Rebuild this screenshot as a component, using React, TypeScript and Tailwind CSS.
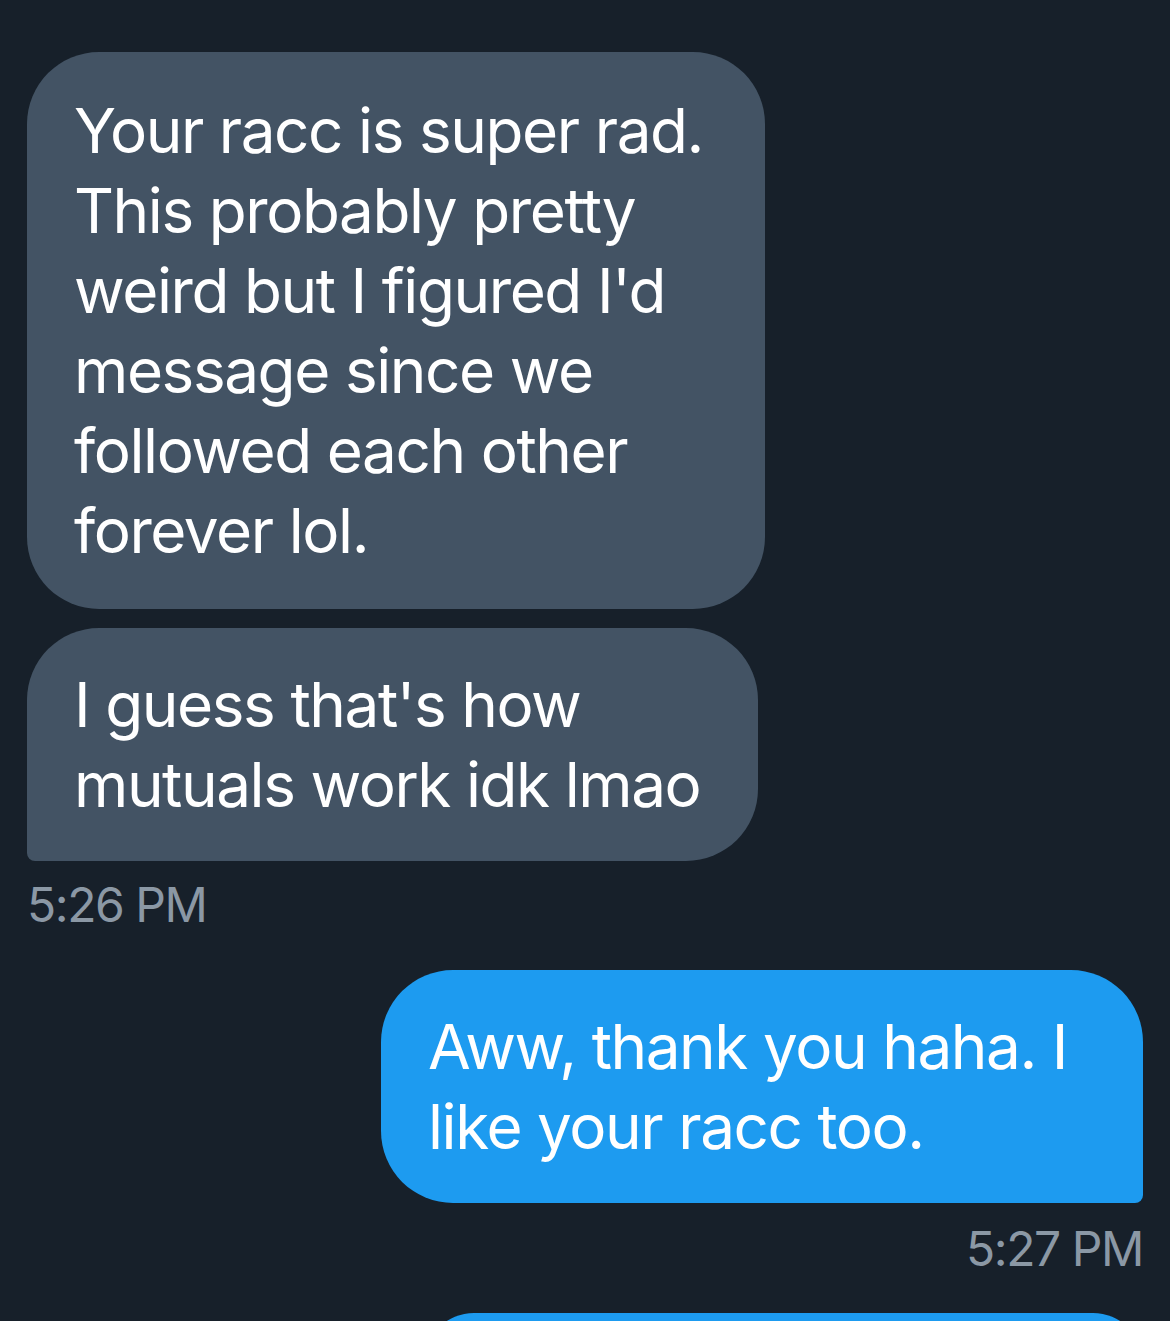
import React from "react";

const font = { fontFamily: "Inter, 'Noto Sans', sans-serif" };

const App = () => {
  return (
    <div
      className="min-h-screen h-[1321px] overflow-hidden bg-[#17202a] px-[27px] pt-[52px] text-white"
      style={font}
    >
      <div className="flex flex-col items-start gap-[19px]">
        <div className="w-[738px] rounded-[72px] bg-[#435364] pl-[47px] pr-[40px] pt-[39px] pb-[38px] text-[62px] leading-[80px] tracking-[-0.023em]">
          Your racc is super rad.
          <br />
          This probably pretty
          <br />
          weird but I figured I'd
          <br />
          message since we
          <br />
          followed each other
          <br />
          forever lol.
        </div>
        <div className="w-[731px] rounded-[72px] rounded-bl-[8px] bg-[#435364] pl-[47px] pr-[40px] pt-[37px] pb-[36px] text-[62px] leading-[80px] tracking-[-0.023em]">
          I guess that's how
          <br />
          mutuals work idk lmao
        </div>
      </div>
      <div className="mt-[16px] text-[48px] leading-[56px] tracking-[-0.03em] text-[#8b98a5]">
        5:26 PM
      </div>

      <div className="mt-[37px] flex flex-col items-end">
        <div className="w-[762px] rounded-[72px] rounded-br-[8px] bg-[#1d9bf0] pl-[47px] pr-[40px] pt-[37px] pb-[36px] text-[62px] leading-[80px] tracking-[-0.023em]">
          Aww, thank you haha. I
          <br />
          like your racc too.
        </div>
        <div className="mt-[18px] text-[48px] leading-[56px] tracking-[-0.03em] text-[#8b98a5]">
          5:27 PM
        </div>
        <div className="mt-[36px] h-[100px] w-[719px] shrink-0 rounded-[72px] bg-[#1d9bf0]" />
      </div>
    </div>
  );
};

export default App;
